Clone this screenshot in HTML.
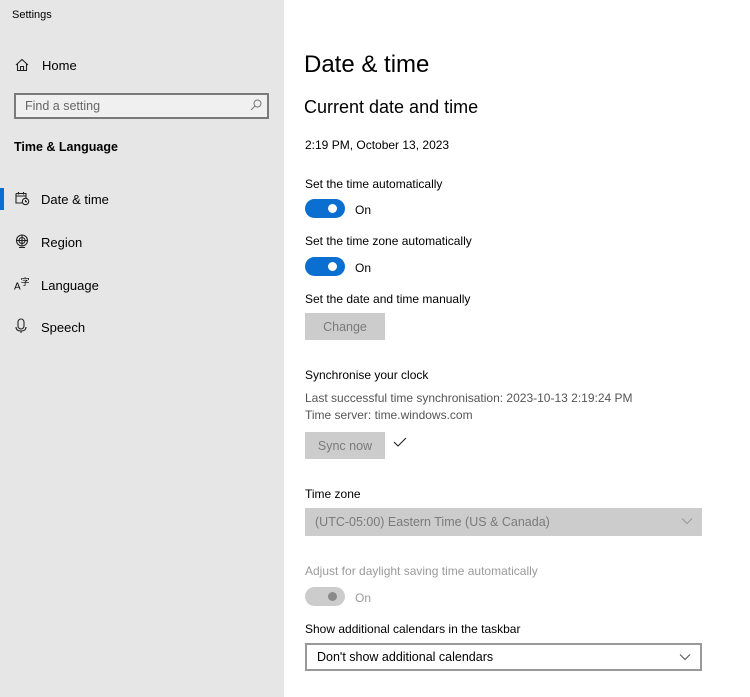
<!DOCTYPE html>
<html><head><meta charset="utf-8"><style>
*{margin:0;padding:0;box-sizing:border-box}
body{width:750px;height:697px;background:#fff;font-family:"Liberation Sans",sans-serif;color:#000;position:relative;overflow:hidden}
.sb{position:absolute;left:0;top:0;width:284px;height:697px;background:#e6e6e6}
.t{position:absolute;white-space:nowrap;line-height:1;font-size:12px}
.tg{position:absolute;width:40px;height:19px;border-radius:10px;background:#0a6fd1}
.tg::after{content:"";position:absolute;right:8px;top:5px;width:9px;height:9px;border-radius:50%;background:#fff}
.tg.dis::after{background:#8a8a8a}
.btn{position:absolute;width:80px;height:27px;background:#cccccc;color:#7a7a7a;font-size:12.5px;text-align:center;line-height:28px}
.dd{position:absolute;left:305px;width:397px;height:28px;font-size:12.5px;line-height:29px;padding-left:10px}
.chev{position:absolute;right:9px;top:9px}
.ic{position:absolute}
</style></head><body>
<div class="sb"></div>
<div class="t" style="left:12px;top:10px;font-size:11px">Settings</div>
<svg class="ic" style="left:15px;top:58px" width="14" height="14" viewBox="0 0 14 14" fill="none" stroke="#222" stroke-width="1.1"><path d="M1 7L7 1.5L13 7M2.5 6V12.5H11.5V6M5.5 12.5V8.5H8.5V12.5"/></svg>
<div class="t" style="left:42px;top:59px;font-size:13px">Home</div>
<div style="position:absolute;left:14px;top:93px;width:255px;height:26px;border:2px solid #7a7a7a;background:#f0f0f0"></div>
<div class="t" style="left:25px;top:100px;color:#666;font-size:12.5px">Find a setting</div>
<svg class="ic" style="left:250px;top:99px" width="12" height="12" viewBox="0 0 12 12" fill="none" stroke="#777" stroke-width="1"><circle cx="7.5" cy="4.5" r="3.5"/><path d="M5 7L1 11"/></svg>
<div class="t" style="left:14px;top:141px;font-weight:bold;font-size:12.5px">Time &amp; Language</div>
<div style="position:absolute;left:0;top:188px;width:4px;height:22px;background:#0a6fd1"></div>
<svg class="ic" style="left:15px;top:191px" width="15" height="15" viewBox="0 0 15 15" fill="none" stroke="#222" stroke-width="1.1"><path d="M1 2.5H11V7M1 2.5V12H7M1 5H11M3.5 1V3.5M8.5 1V3.5"/><circle cx="10.5" cy="10.5" r="3.2"/><path d="M10.5 9V10.7H12"/></svg>
<div class="t" style="left:41px;top:193px;font-size:13px">Date &amp; time</div>
<svg class="ic" style="left:15px;top:234px" width="14" height="15" viewBox="0 0 14 15" fill="none" stroke="#222" stroke-width="1.1"><circle cx="7" cy="6.5" r="5.5"/><circle cx="7" cy="6.5" r="3"/><path d="M2 6.5H12M7 1V12M4 13.5H10"/></svg>
<div class="t" style="left:41px;top:236px;font-size:13px">Region</div>
<div class="t" style="left:14px;top:278px;font-size:10px">A<sup style="font-size:9px">字</sup></div>
<div class="t" style="left:41px;top:279px;font-size:13px">Language</div>
<svg class="ic" style="left:15px;top:318px" width="12" height="16" viewBox="0 0 12 16" fill="none" stroke="#222" stroke-width="1.1"><rect x="3" y="1" width="6" height="10" rx="3"/><path d="M1 9Q1 13 6 13Q11 13 11 9M6 13V15"/></svg>
<div class="t" style="left:41px;top:321px;font-size:13px">Speech</div>

<div class="t" style="left:304px;top:53px;font-size:24px">Date &amp; time</div>
<div class="t" style="left:304px;top:98px;font-size:18px">Current date and time</div>
<div class="t" style="left:305px;top:139px">2:19 PM, October 13, 2023</div>
<div class="t" style="left:305px;top:178px">Set the time automatically</div>
<div class="tg" style="left:305px;top:199px"></div>
<div class="t" style="left:355px;top:204px">On</div>
<div class="t" style="left:305px;top:235px">Set the time zone automatically</div>
<div class="tg" style="left:305px;top:257px"></div>
<div class="t" style="left:355px;top:262px">On</div>
<div class="t" style="left:305px;top:293px">Set the date and time manually</div>
<div class="btn" style="left:305px;top:313px">Change</div>
<div class="t" style="left:305px;top:369px">Synchronise your clock</div>
<div class="t" style="left:305px;top:392px;color:#555">Last successful time synchronisation: 2023-10-13 2:19:24 PM</div>
<div class="t" style="left:305px;top:409px;color:#555">Time server: time.windows.com</div>
<div class="btn" style="left:305px;top:432px">Sync now</div>
<svg class="ic" style="left:393px;top:437px" width="14" height="10" viewBox="0 0 14 10" fill="none" stroke="#222" stroke-width="1.1"><path d="M1 5L5 9L13 1"/></svg>
<div class="t" style="left:305px;top:488px">Time zone</div>
<div class="dd" style="top:508px;background:#cccccc;color:#7a7a7a">(UTC-05:00) Eastern Time (US &amp; Canada)<svg class="chev" width="12" height="8" viewBox="0 0 12 8" fill="none" stroke="#999" stroke-width="1.1"><path d="M1 1.5L6 6.5L11 1.5"/></svg></div>
<div class="t" style="left:305px;top:565px;color:#9a9a9a">Adjust for daylight saving time automatically</div>
<div class="tg dis" style="left:305px;top:587px;background:#cccccc"></div>
<div class="t" style="left:355px;top:592px;color:#9a9a9a">On</div>
<div class="t" style="left:305px;top:623px">Show additional calendars in the taskbar</div>
<div class="dd" style="top:643px;border:2px solid #999;background:#fff;line-height:25px">Don't show additional calendars<svg class="chev" style="top:8px" width="12" height="8" viewBox="0 0 12 8" fill="none" stroke="#555" stroke-width="1.1"><path d="M1 1.5L6 6.5L11 1.5"/></svg></div>
</body></html>
